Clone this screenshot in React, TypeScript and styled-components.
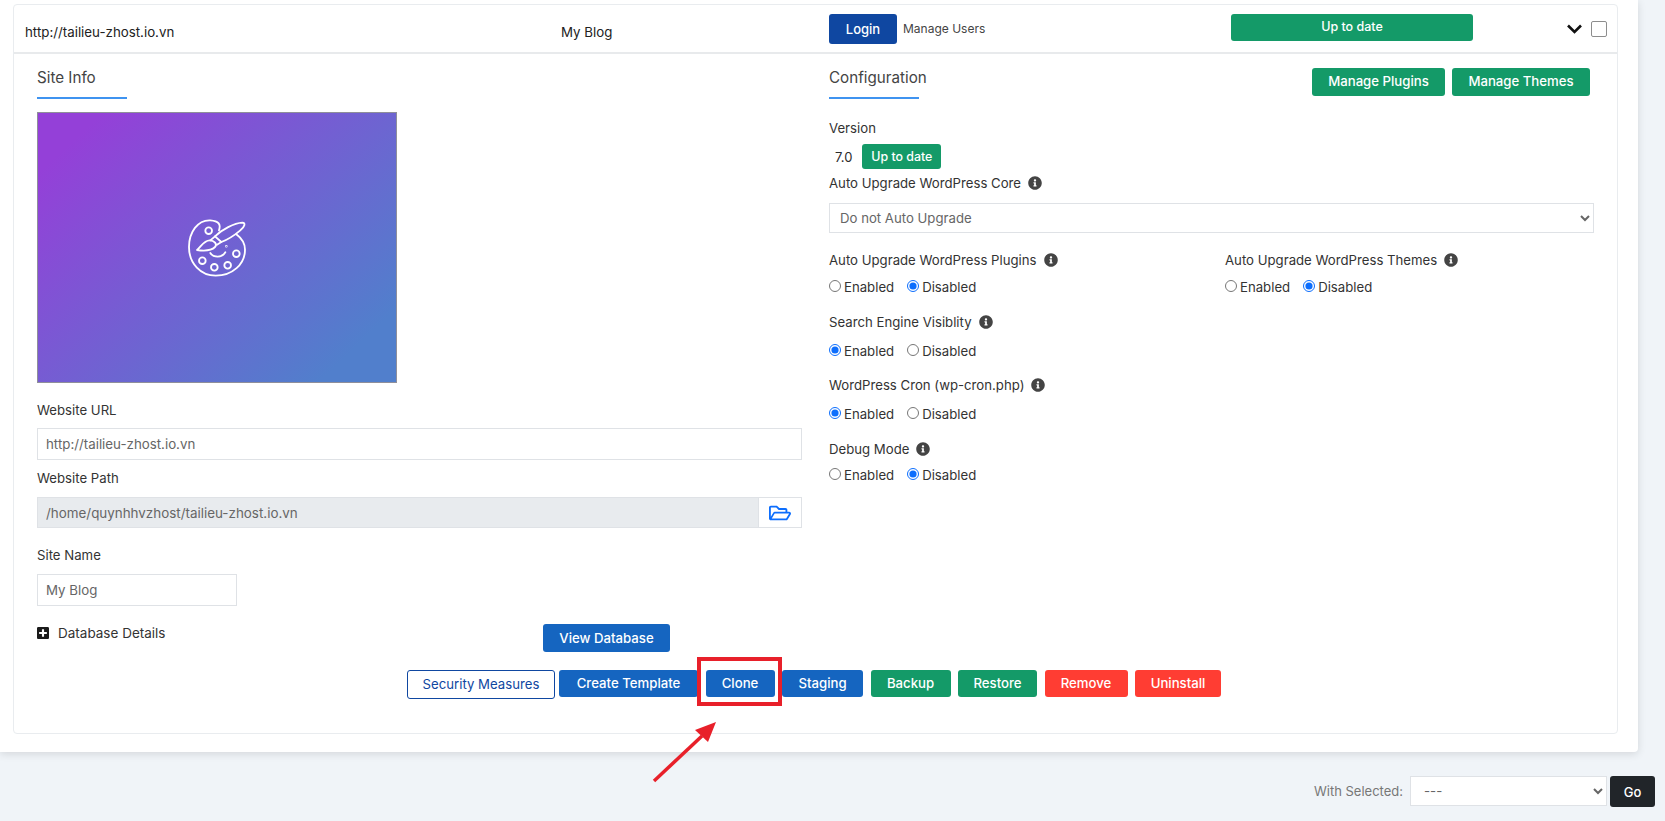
import React from 'react'
import styled, { createGlobalStyle } from 'styled-components'
import { FaInfoCircle, FaPlusSquare, FaRegFolderOpen } from 'react-icons/fa'

const Global = createGlobalStyle`
  html, body { margin: 0; padding: 0; height: 821px; overflow: hidden; }
  body { background: #f0f4f8; font-family: Inter, "Liberation Sans", sans-serif; color: #2b2b2b; }
  * { box-sizing: border-box; }
`

const Panel = styled.div`
  width: 1638px;
  height: 752px;
  background: #fff;
  padding: 4px 20px 0 13px;
  border-bottom-right-radius: 4px;
  box-shadow: 0 2px 8px rgba(0, 0, 0, 0.12);
`

const Card = styled.div`
  height: 730px;
  border: 1px solid #e9ecef;
  border-radius: 4px;
`

const Header = styled.div`
  height: 49px;
  display: flex;
  border-bottom: 2px solid #e8eaec;
  position: relative;
`

const HeaderCell = styled.div<{ $w: number; $pl?: number }>`
  width: ${(p) => p.$w}px;
  padding-left: ${(p) => p.$pl || 0}px;
  padding-top: 18px;
  font-size: 13.3px;
  line-height: 18px;
  color: #222;
`

const LoginCell = styled.div`
  width: 402px;
  padding-top: 9px;
  display: flex;
  align-items: flex-start;
`

const Login = styled.button`
  width: 68px;
  height: 30px;
  border: 0;
  border-radius: 3px;
  background: #0f47a1;
  color: #fff;
  font: 500 13px Inter, sans-serif;
`

const ManageUsers = styled.span`
  margin-left: 6px;
  font-size: 12px;
  line-height: 30px;
  color: #444;
`

const StatusBar = styled.div`
  width: 242px;
  height: 27px;
  margin-top: 9px;
  border-radius: 3px;
  background: #149a68;
  color: #fff;
  font-size: 12.5px;
  font-weight: 500;
  line-height: 25px;
  text-align: center;
`

const HeaderTail = styled.div`
  display: flex;
  align-items: center;
  margin-left: 94px;
  gap: 9px;
  height: 48px;
`

const Check = styled.span`
  width: 16px;
  height: 16px;
  border: 1px solid #8d8d8d;
  border-radius: 2px;
  background: #fff;
`

const Body = styled.div`
  display: flex;
`

const LeftCol = styled.div`
  width: 815px;
  padding-left: 23px;
`

const RightCol = styled.div`
  flex: 1;
  padding-right: 23px;
`

const Heading = styled.h3`
  width: ${(p: { $w?: number }) => p.$w || 90}px;
  margin: 0;
  padding: 12px 0 7px;
  font-size: 15.2px;
  font-weight: 400;
  line-height: 24px;
  color: #444;
  white-space: nowrap;
  border-bottom: 2px solid #3f93f0;
`

const Thumb = styled.div`
  width: 360px;
  height: 271px;
  margin-top: 13px;
  display: flex;
  align-items: center;
  justify-content: center;
  border: 1px solid #8f8f9a;
  background: linear-gradient(137deg, #9440d8 10%, #517fcc 88%);
`

const Label = styled.div<{ $top?: number }>`
  margin-top: ${(p) => p.$top ?? 0}px;
  display: flex;
  align-items: center;
  gap: 7px;
  font-size: 13.2px;
  line-height: 20px;
  color: #333;
  white-space: nowrap;

  svg {
    width: 14px;
    height: 14px;
    color: #444;
  }
`

const Input = styled.input<{ $w?: number; $top?: number }>`
  display: block;
  width: ${(p) => p.$w || 765}px;
  height: 32px;
  margin-top: ${(p) => p.$top ?? 8}px;
  padding: 0 8px;
  border: 1px solid #dfe2e6;
  background: #fff;
  color: #666;
  font: 400 13.3px Inter, sans-serif;
  outline: none;
`

const PathGroup = styled.div`
  display: flex;
  width: 765px;
  height: 31px;
  margin-top: 9px;
`

const PathInput = styled.input`
  flex: 1;
  min-width: 0;
  padding: 0 8px;
  border: 1px solid #dfe2e6;
  border-right: 0;
  background: #e8ebee;
  color: #666;
  font: 400 13.4px Inter, sans-serif;
  outline: none;
`

const PathAddon = styled.span`
  width: 44px;
  display: flex;
  align-items: center;
  justify-content: center;
  border: 1px solid #dfe2e6;
  color: #0d6efd;
  font-size: 22px;
`

const DbRow = styled.div`
  display: flex;
  margin-top: 18px;
  height: 28px;
`

const DbDetails = styled.div`
  width: 506px;
  display: flex;
  align-items: center;
  gap: 9px;
  height: 18px;
  font-size: 13.5px;
  color: #333;

  svg {
    width: 12px;
    height: 14px;
    color: #1b1b1b;
  }
`

const Btn = styled.button<{ $w: number; $bg: string; $h?: number }>`
  flex: none;
  width: ${(p) => p.$w}px;
  height: ${(p) => p.$h || 27}px;
  padding: 0 0 1px;
  border: 0;
  border-radius: 3px;
  background: ${(p) => p.$bg};
  color: #fff;
  font: 500 13.2px Inter, sans-serif;
  white-space: nowrap;
`

const OutlineBtn = styled(Btn)`
  height: 29px;
  border: 1px solid #0f47a1;
  background: #fff;
  color: #0f47a1;
  font-weight: 400;
  margin-right: -3.5px;
`

const HeadRow = styled.div`
  display: flex;
  align-items: flex-start;
  justify-content: space-between;
  padding-right: 4px;
`

const HeadBtns = styled.div`
  display: flex;
  gap: 7px;
  padding-top: 14px;

  button {
    padding-bottom: 3px;
  }
`

const VersionRow = styled.div`
  display: flex;
  align-items: center;
  height: 25px;
  margin-top: 6px;
  padding-left: 6px;
  font-size: 13px;
`

const SmallBtn = styled(Btn)`
  width: 79px;
  height: 25px;
  margin-left: 10px;
  font-size: 12.4px;
`

const Select = styled.select<{ $w?: number; $top?: number; $px?: number }>`
  display: block;
  width: ${(p) => p.$w || 765}px;
  height: 30px;
  margin-top: ${(p) => p.$top ?? 10}px;
  padding: 0 ${(p) => p.$px ?? 6}px;
  border: 1px solid #dfe2e6;
  border-radius: 0;
  background: #fff;
  color: #666;
  font: 400 13.2px Inter, sans-serif;
`

const TwoCol = styled.div`
  display: flex;
`

const Half = styled.div`
  width: 396px;
`

const Radios = styled.div<{ $top?: number }>`
  display: flex;
  align-items: center;
  height: 20px;
  margin-top: ${(p) => p.$top ?? 7}px;
  font-size: 13.2px;
  color: #333;
`

const RadioItem = styled.label`
  display: flex;
  align-items: center;
  margin-right: 13px;

  input {
    width: 12px;
    height: 12px;
    margin: 0 3px 2px 0;
    accent-color: #0d6efd;
  }
`

const Actions = styled.div`
  display: flex;
  align-items: flex-start;
  justify-content: center;
  gap: 7.5px;
  margin-top: 18px;
  padding-right: 3px;
`

const CloneWrap = styled.div`
  position: relative;
`

const RedBox = styled.span`
  position: absolute;
  left: -9px;
  top: -13px;
  width: 85px;
  height: 49px;
  border: 4px solid #e8202a;
`

const ArrowMark = styled.svg`
  position: absolute;
  left: -56px;
  top: 48px;
`

const Footer = styled.div`
  display: flex;
  align-items: flex-start;
  justify-content: flex-end;
  margin-top: 24px;
  padding-right: 10px;
`

const FooterLabel = styled.span`
  margin-right: 7px;
  font-size: 13px;
  line-height: 30px;
  color: #777;
`

const GoBtn = styled.button`
  width: 45px;
  height: 31px;
  margin-left: 3px;
  border: 0;
  border-radius: 3px;
  background: #212529;
  color: #fff;
  font: 500 13px Inter, sans-serif;
`

function PaletteIcon() {
  return (
    <svg width="60" height="60" viewBox="110 85 180 180" fill="none" stroke="#fff" strokeWidth="5.5" strokeLinecap="round" strokeLinejoin="round">
      <path d="M206 122C212 104 206 94 180 92C142 90 116 128 116 172C116 222 152 258 196 258C246 258 284 224 284 180C284 160 274 146 258 134" />
      <path d="M194 140C214 120 252 100 276 99C287 99 283 112 270 122C252 137 232 150 213 157Z" />
      <path d="M194 140L180 152M213 157L200 165" />
      <path d="M140 181C152 172 160 152 178 152C192 152 202 164 194 172C184 182 160 184 140 181Z" />
      <circle cx="175" cy="123" r="10" />
      <circle cx="258" cy="192" r="10" />
      <circle cx="156" cy="213" r="10" />
      <circle cx="192" cy="233" r="10" />
      <circle cx="232" cy="227" r="10" />
      <path d="M180 190C190 205 215 205 225 188" />
      <circle cx="228" cy="170" r="1" />
    </svg>
  )
}

function RadioPair({ on, name, top }: { on: 'Enabled' | 'Disabled'; name: string; top?: number }) {
  return (
    <Radios $top={top}>
      <RadioItem>
        <input type="radio" name={name} defaultChecked={on === 'Enabled'} />
        Enabled
      </RadioItem>
      <RadioItem>
        <input type="radio" name={name} defaultChecked={on === 'Disabled'} />
        Disabled
      </RadioItem>
    </Radios>
  )
}

export default function App() {
  return (
    <>
      <Global />
      <Panel>
        <Card>
          <Header>
            <HeaderCell $w={547} $pl={11}>http://tailieu-zhost.io.vn</HeaderCell>
            <HeaderCell $w={268}>My Blog</HeaderCell>
            <LoginCell>
              <Login>Login</Login>
              <ManageUsers>Manage Users</ManageUsers>
            </LoginCell>
            <StatusBar>Up to date</StatusBar>
            <HeaderTail>
              <svg width="15" height="10" viewBox="0 0 15 10" fill="none" stroke="#111" strokeWidth="2.6">
                <path d="M1 1.5L7.5 8L14 1.5" />
              </svg>
              <Check />
            </HeaderTail>
          </Header>
          <Body>
            <LeftCol>
              <Heading>Site Info</Heading>
              <Thumb>
                <PaletteIcon />
              </Thumb>
              <Label $top={17}>Website URL</Label>
              <Input readOnly value="http://tailieu-zhost.io.vn" />
              <Label $top={8}>Website Path</Label>
              <PathGroup>
                <PathInput readOnly value="/home/quynhhvzhost/tailieu-zhost.io.vn" />
                <PathAddon>
                  <FaRegFolderOpen />
                </PathAddon>
              </PathGroup>
              <Label $top={17}>Site Name</Label>
              <Input $w={200} $top={9} readOnly value="My Blog" />
              <DbRow>
                <DbDetails>
                  <FaPlusSquare />
                  Database Details
                </DbDetails>
                <Btn $w={127} $h={28} $bg="#1565c0">View Database</Btn>
              </DbRow>
            </LeftCol>
            <RightCol>
              <HeadRow>
                <Heading>Configuration</Heading>
                <HeadBtns>
                  <Btn $w={133} $h={28} $bg="#149a68">Manage Plugins</Btn>
                  <Btn $w={138} $h={28} $bg="#149a68">Manage Themes</Btn>
                </HeadBtns>
              </HeadRow>
              <Label $top={19}>Version</Label>
              <VersionRow>
                7.0
                <SmallBtn $w={79} $bg="#149a68">Up to date</SmallBtn>
              </VersionRow>
              <Label $top={4}>
                Auto Upgrade WordPress Core <FaInfoCircle />
              </Label>
              <Select defaultValue="no">
                <option value="no">Do not Auto Upgrade</option>
              </Select>
              <TwoCol>
                <Half>
                  <Label $top={17}>
                    Auto Upgrade WordPress Plugins <FaInfoCircle />
                  </Label>
                  <RadioPair name="plugins" on="Disabled" />
                </Half>
                <div>
                  <Label $top={17}>
                    Auto Upgrade WordPress Themes <FaInfoCircle />
                  </Label>
                  <RadioPair name="themes" on="Disabled" />
                </div>
              </TwoCol>
              <Label $top={15}>
                Search Engine Visiblity <FaInfoCircle />
              </Label>
              <RadioPair name="search" on="Enabled" top={9} />
              <Label $top={14}>
                WordPress Cron (wp-cron.php) <FaInfoCircle />
              </Label>
              <RadioPair name="cron" on="Enabled" top={9} />
              <Label $top={15}>
                Debug Mode <FaInfoCircle />
              </Label>
              <RadioPair name="debug" on="Disabled" top={6} />
            </RightCol>
          </Body>
          <Actions>
            <OutlineBtn $w={148} $bg="#fff">Security Measures</OutlineBtn>
            <Btn $w={139} $bg="#1565c0">Create Template</Btn>
            <CloneWrap>
              <Btn $w={69} $bg="#1565c0">Clone</Btn>
              <RedBox />
              <ArrowMark width="72" height="72" viewBox="0 0 72 72">
                <path d="M4 63L52 18" stroke="#e8202a" strokeWidth="3.5" />
                <path d="M66 4L45 12L58 24Z" fill="#e8202a" />
              </ArrowMark>
            </CloneWrap>
            <Btn $w={81} $bg="#1565c0">Staging</Btn>
            <Btn $w={80} $bg="#149a68">Backup</Btn>
            <Btn $w={79} $bg="#149a68">Restore</Btn>
            <Btn $w={83} $bg="#ff3d33">Remove</Btn>
            <Btn $w={86} $bg="#ff3d33">Uninstall</Btn>
          </Actions>
        </Card>
      </Panel>
      <Footer>
        <FooterLabel>With Selected:</FooterLabel>
        <Select $w={197} $top={0} $px={9} defaultValue="none">
          <option value="none">---</option>
        </Select>
        <GoBtn>Go</GoBtn>
      </Footer>
    </>
  )
}
